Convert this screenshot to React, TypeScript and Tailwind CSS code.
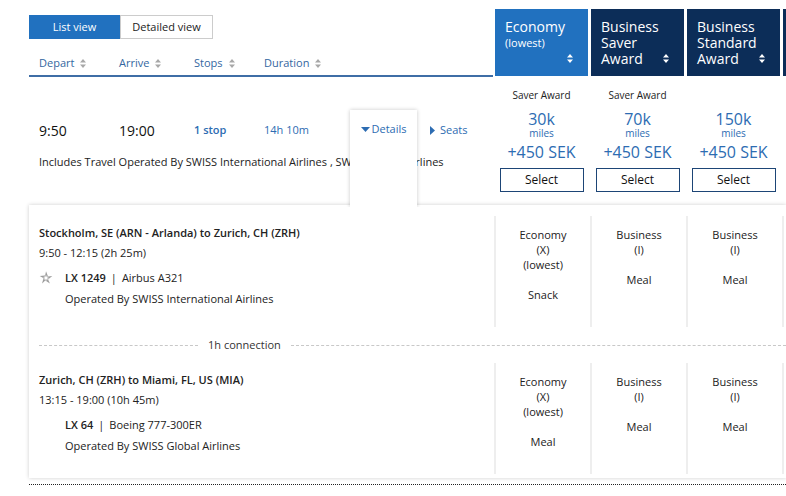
import React from 'react';

const BLUE = '#2d6cb2';

function SortIcon({ color = '#a8a8a8' }: { color?: string }) {
  return (
    <svg width="6" height="9" viewBox="0 0 6 9" className="shrink-0">
      <path d="M3 0L6 3.4H0Z M3 9L0 5.6H6Z" fill={color} />
    </svg>
  );
}

function StarLogo() {
  const arms = [0, 72, 144, 216, 288];
  return (
    <svg width="14" height="14" viewBox="-10 -10 20 20">
      {arms.map((a) => (
        <polygon
          key={a}
          points="0,-9.5 2.8,-2.4 -1.3,-3"
          fill="#9c9c9c"
          transform={`rotate(${a})`}
        />
      ))}
      {arms.map((a) => (
        <polygon
          key={'b' + a}
          points="2.8,-2.4 1.3,3 4.5,1.5"
          fill="#c2c2c2"
          transform={`rotate(${a})`}
        />
      ))}
    </svg>
  );
}

const headers = [
  { lines: ['Economy'], sub: '(lowest)', bg: 'bg-[#2171bf]', icon: true },
  { lines: ['Business', 'Saver', 'Award'], bg: 'bg-[#0c2d58]', icon: true },
  { lines: ['Business', 'Standard', 'Award'], bg: 'bg-[#0c2d58]', icon: true },
  { lines: [], bg: 'bg-[#0c2d58]', icon: false },
];

const fares = [
  { label: 'Saver Award', miles: '30k' },
  { label: 'Saver Award', miles: '70k' },
  { label: '', miles: '150k' },
];

type Cell = { cabin: string; code: string; lowest?: boolean; meal: string };

function Segment({
  route,
  times,
  flight,
  aircraft,
  operator,
  star,
  cells,
}: {
  route: string;
  times: string;
  flight: string;
  aircraft: string;
  operator: string;
  star?: boolean;
  cells: Cell[];
}) {
  return (
    <div className="flex">
      <div className="w-[465px] shrink-0 pl-[10px] pt-[9px] text-[11px] leading-[16px] text-[#222]">
        <div className="font-semibold">{route}</div>
        <div className="mt-[4px]">{times}</div>
        <div className="mt-[9px] flex items-center">
          <div className="flex w-[26px] justify-start">{star && <StarLogo />}</div>
          <span className="font-semibold">{flight}</span>
          <span className="mx-[5px]">|</span>
          <span>{aircraft}</span>
        </div>
        <div className="mt-[5px] pl-[26px]">{operator}</div>
      </div>
      {cells.map((c, i) => (
        <div
          key={i}
          className="flex h-[111px] w-[96px] shrink-0 flex-col items-center border-l-2 border-[#eeeeee] pt-[11px] text-[11px] leading-[15px] text-[#222]"
        >
          {c.cabin && (
            <>
              <div>{c.cabin}</div>
              <div>{c.code}</div>
              {c.lowest && <div>(lowest)</div>}
              <div className="mt-[15px]">{c.meal}</div>
            </>
          )}
        </div>
      ))}
    </div>
  );
}

export default function App() {
  const cells1: Cell[] = [
    { cabin: 'Economy', code: '(X)', lowest: true, meal: 'Snack' },
    { cabin: 'Business', code: '(I)', meal: 'Meal' },
    { cabin: 'Business', code: '(I)', meal: 'Meal' },
    { cabin: '', code: '', meal: '' },
  ];
  const cells2: Cell[] = [
    { cabin: 'Economy', code: '(X)', lowest: true, meal: 'Meal' },
    { cabin: 'Business', code: '(I)', meal: 'Meal' },
    { cabin: 'Business', code: '(I)', meal: 'Meal' },
    { cabin: '', code: '', meal: '' },
  ];

  return (
    <div className="h-[496px] w-[786px] overflow-hidden bg-white font-['Open_Sans',sans-serif] text-[#222]">
      {/* header */}
      <div className="flex pl-[29px]">
        <div className="flex h-[77px] w-[464px] shrink-0 flex-col border-b-2 border-[#3f6ea6]">
          <div className="mt-[15px] flex h-[24px] w-[184px] text-[11px]">
            <div className="flex w-[91px] items-center justify-center bg-[#2171bf] text-white">List view</div>
            <div className="flex flex-1 items-center justify-center border border-[#cccccc] bg-white text-[#222]">
              Detailed view
            </div>
          </div>
          <div className="mt-[16px] flex h-[16px] items-center pl-[10px] text-[11px] text-[#34679f]">
            <div className="flex w-[80px] items-center gap-[6px]">
              Depart <SortIcon />
            </div>
            <div className="flex w-[75px] items-center gap-[6px]">
              Arrive <SortIcon />
            </div>
            <div className="flex w-[70px] items-center gap-[6px]">
              Stops <SortIcon />
            </div>
            <div className="flex items-center gap-[6px]">
              Duration <SortIcon />
            </div>
          </div>
        </div>
        <div className="ml-[2px] mt-[9px] flex gap-[3px]">
          {headers.map((h, i) => (
            <div key={i} className={`flex h-[67px] w-[93px] shrink-0 ${h.bg} text-white`}>
              <div className="flex-1 pl-[10px] pt-[10px] text-[14px] leading-[16px]">
                {h.lines.map((l) => (
                  <div key={l}>{l}</div>
                ))}
                {h.sub && <div className="text-[11px] leading-[16px]">{h.sub}</div>}
              </div>
              {h.icon && (
                <div className="mb-[13px] mr-[15px] self-end">
                  <SortIcon color="#ffffff" />
                </div>
              )}
            </div>
          ))}
        </div>
      </div>

      {/* flight row */}
      <div className="flex h-[128px] pl-[29px]">
        <div className="relative w-[464px] shrink-0 pl-[10px]">
          <div className="mt-[43px] flex h-[20px] items-center">
            <div className="w-[80px] text-[14px] text-[#111]">9:50</div>
            <div className="w-[75px] text-[14px] text-[#111]">19:00</div>
            <div className="w-[70px] text-[11px] font-semibold" style={{ color: BLUE }}>
              1 stop
            </div>
            <div className="w-[86px] text-[11px]" style={{ color: BLUE }}>
              14h 10m
            </div>
            <div className="w-[67px]" />
            <div className="ml-[13px] flex items-center gap-[5px] text-[11px]" style={{ color: BLUE }}>
              <svg width="5" height="9" viewBox="0 0 5 9">
                <path d="M0 0L5 4.5L0 9Z" fill={BLUE} />
              </svg>
              Seats
            </div>
          </div>
          <div className="mt-[14px] text-[11px] leading-[16px]">
            Includes Travel Operated By SWISS International Airlines , SWISS Global Airlines
          </div>
          <div className="absolute left-[321px] top-[33px] z-10 flex h-[97px] w-[67px] justify-center bg-white pt-[11px] shadow-[0_0_4px_rgba(0,0,0,0.22)] [clip-path:inset(-6px_-6px_0_-6px)]">
            <div className="flex h-[16px] items-center gap-[2px] text-[11px]" style={{ color: BLUE }}>
              <svg width="9" height="5" viewBox="0 0 9 5">
                <path d="M0 0H9L4.5 5Z" fill={BLUE} />
              </svg>
              Details
            </div>
          </div>
        </div>
        {fares.map((f, i) => (
          <div key={i} className="flex w-[96px] shrink-0 flex-col items-center pl-[1px] pt-[10px]">
            <div className="h-[16px] text-[10px] leading-[16px] text-[#222]">{f.label}</div>
            <div className="mt-[7px] text-[16px] leading-[18px]" style={{ color: BLUE }}>
              {f.miles}
            </div>
            <div className="text-[10px] leading-[10px]" style={{ color: BLUE }}>
              miles
            </div>
            <div className="mt-[4px] text-[16px] leading-[20px]" style={{ color: BLUE }}>
              +450 SEK
            </div>
            <button className="mt-[6px] h-[24px] w-[84px] border border-[#1d4576] bg-white text-[12px] text-[#111]">
              Select
            </button>
          </div>
        ))}
      </div>

      {/* details panel */}
      <div className="ml-[29px] bg-white pb-[4px] shadow-[0_0_4px_rgba(0,0,0,0.2)]">
        <div className="pt-[11px]">
          <Segment
            route="Stockholm, SE (ARN - Arlanda) to Zurich, CH (ZRH)"
            times="9:50 - 12:15 (2h 25m)"
            flight="LX 1249"
            aircraft="Airbus A321"
            operator="Operated By SWISS International Airlines"
            star
            cells={cells1}
          />
        </div>
        <div className="flex h-[36px] items-center text-[11px] text-[#333]">
          <div className="ml-[10px] w-[159px] border-t border-dashed border-[#c8c8c8]" />
          <div className="mx-[10px]">1h connection</div>
          <div className="flex-1 border-t border-dashed border-[#c8c8c8]" />
        </div>
        <Segment
          route="Zurich, CH (ZRH) to Miami, FL, US (MIA)"
          times="13:15 - 19:00 (10h 45m)"
          flight="LX 64"
          aircraft="Boeing 777-300ER"
          operator="Operated By SWISS Global Airlines"
          cells={cells2}
        />
      </div>
      <div className="ml-[29px] mt-[6px] border-t border-dotted border-[#222]" />
    </div>
  );
}
